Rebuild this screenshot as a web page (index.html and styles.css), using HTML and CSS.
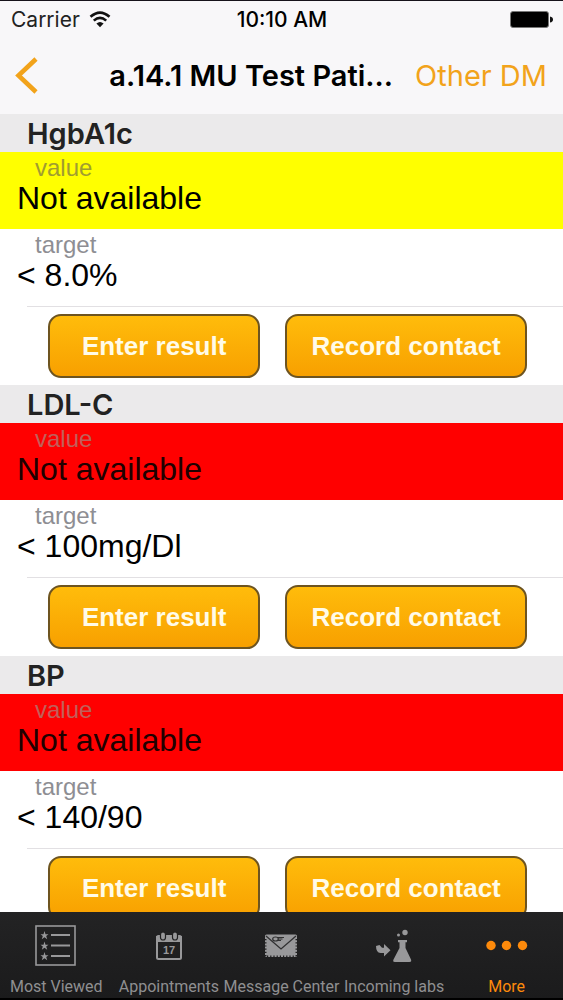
FILE: index.html
```html
<!DOCTYPE html>
<html lang="en">
<head>
<meta charset="UTF-8">
<meta name="viewport" content="width=device-width, initial-scale=1.0">
<title>Patient results</title>
<link rel="stylesheet" href="styles.css">
</head>
<body>

<header class="top">
    <div class="status">
        <span class="carrier">Carrier
            <svg width="22" height="17" viewBox="0 0 22 17">
                <path d="M1.5 5.8Q11-2.6 20.5 5.8M4.8 9.6Q11 4 17.2 9.6" fill="none" stroke="#111" stroke-width="2.6"/>
                <path d="M7.4 12.4Q11 9.4 14.6 12.4L11 16.2Z" fill="#111"/>
            </svg>
        </span>
        <span class="time">10:10 AM</span>
        <svg class="battery" width="43" height="17" viewBox="0 0 43 17">
            <rect x="0.5" y="0.5" width="38" height="16" rx="2.5" fill="#000" stroke="#777"/>
            <path d="M40 5.5Q43 6 43 8.5T40 11.5Z" fill="#111"/>
        </svg>
    </div>
    <nav class="navbar">
        <button class="back" aria-label="Back">
            <svg width="23" height="37" viewBox="0 0 23 37">
                <path d="M21 2L3.5 18.5L21 35" fill="none" stroke="#f2a31b" stroke-width="4.6"/>
            </svg>
        </button>
        <h1 class="title">a.14.1 MU Test Pati...</h1>
        <button class="other">Other DM</button>
    </nav>
</header>

<main class="results">
    <section>
        <h2 class="name">HgbA1c</h2>
        <div class="row yellow">
            <p class="label">value</p>
            <p class="data">Not available</p>
        </div>
        <div class="row">
            <p class="label">target</p>
            <p class="data">&lt; 8.0%</p>
        </div>
        <div class="actions">
            <button class="action">Enter result</button>
            <button class="action wide">Record contact</button>
        </div>
    </section>

    <section>
        <h2 class="name">LDL-C</h2>
        <div class="row red">
            <p class="label">value</p>
            <p class="data">Not available</p>
        </div>
        <div class="row">
            <p class="label">target</p>
            <p class="data">&lt; 100mg/Dl</p>
        </div>
        <div class="actions">
            <button class="action">Enter result</button>
            <button class="action wide">Record contact</button>
        </div>
    </section>

    <section>
        <h2 class="name">BP</h2>
        <div class="row red">
            <p class="label">value</p>
            <p class="data">Not available</p>
        </div>
        <div class="row">
            <p class="label">target</p>
            <p class="data">&lt; 140/90</p>
        </div>
        <div class="actions">
            <button class="action">Enter result</button>
            <button class="action wide">Record contact</button>
        </div>
    </section>
</main>

<nav class="tabs">
    <a class="tab" href="#viewed">
        <svg width="42" height="42" viewBox="0 0 42 42">
            <rect x="1" y="1" width="39" height="39" fill="none" stroke="#98989a" stroke-width="1.6"/>
            <path d="M16 10H35M16 20.5H35M16 31H35" stroke="#98989a" stroke-width="2"/>
            <!-- one star, drawn three times -->
            <g fill="#98989a">
                <path id="star" d="M9.5 6L10.5 9.2H13.5L11.2 11L12.2 14.2L9.5 12.3L6.8 14.2L7.8 11L5.5 9.2H8.5Z"/>
                <use href="#star" y="10.5"/>
                <use href="#star" y="21"/>
            </g>
        </svg>
        <span>Most Viewed</span>
    </a>
    <a class="tab" href="#appointments">
        <svg width="28" height="42" viewBox="0 0 28 42">
            <rect x="2" y="11" width="24" height="23" rx="1.5" fill="none" stroke="#98989a" stroke-width="2"/>
            <path d="M1 11H27V17H1Z" fill="#98989a"/>
            <rect x="5.5" y="7" width="5" height="8" rx="2.5" fill="#98989a" stroke="#202021" stroke-width="1.2"/>
            <rect x="17.5" y="7" width="5" height="8" rx="2.5" fill="#98989a" stroke="#202021" stroke-width="1.2"/>
            <text class="day" x="14" y="29" text-anchor="middle">17</text>
        </svg>
        <span>Appointments</span>
    </a>
    <a class="tab" href="#messages">
        <svg width="34" height="42" viewBox="0 0 34 42">
            <rect x="1" y="9.5" width="32" height="22.5" rx="1.5" fill="#98989a"/>
            <path d="M1.5 14V32M32.5 14V32M3 31.5H32" fill="none" stroke="#202021" stroke-width="2" stroke-dasharray="1.2 2"/>
            <path d="M2 11L17 24L32 11" fill="none" stroke="#303031" stroke-width="1.3"/>
            <ellipse cx="11.5" cy="14" rx="2.8" ry="2" fill="none" stroke="#303031" stroke-width="1.2"/>
            <path d="M13 12.5H20M14 14H18.5M13 15.5H17" stroke="#303031"/>
        </svg>
        <span>Message Center</span>
    </a>
    <a class="tab" href="#labs">
        <svg width="36" height="42" viewBox="0 0 36 42">
            <g fill="#98989a">
                <path d="M0 21L3.5 20L6 22.8H8V19L14.500 25.200L8 31.500V28H4.500Q0 27.500 0 21Z"/>
                <path d="M22 15H31V17.200H29.500V23L35 34.500Q35.800 37 33.500 37H18.800Q16.500 37 17.500 34.500L23.500 23V17.200H22Z"/>
                <circle cx="22.5" cy="10" r="1.5"/>
                <circle cx="29" cy="7.5" r="2.7"/>
            </g>
        </svg>
        <span>Incoming labs</span>
    </a>
    <a class="tab active" href="#more">
        <svg width="42" height="42" viewBox="0 0 42 42">
            <g fill="#fd8a0b">
                <circle cx="5" cy="20.5" r="4.7"/>
                <circle cx="20.5" cy="20.5" r="4.7"/>
                <circle cx="36.5" cy="20.5" r="4.7"/>
            </g>
        </svg>
        <span>More</span>
    </a>
</nav>

</body>
</html>
```

FILE: styles.css
```css
* {
    box-sizing: border-box;
    margin: 0;
}
body {
    display: flex;
    flex-direction: column;
    height: 100vh;
    overflow: hidden;
    background: white;
    color: black;
    font-family: "Liberation Sans", Arial, sans-serif;
}
button {
    border: none;
    padding: 0;
    background: none;
    font-family: inherit;
}
svg {
    display: block;
}

/* status bar and title */
.top {
    flex: none;
    border-top: 1px solid #16121a;
    background: #f8f7f9;
    font-family: Inter, sans-serif;
}
.status {
    display: grid;
    grid-template-columns: 1fr auto 1fr;
    align-items: center;
    height: 37px;
    padding: 0 10px 0 11px;
    font-size: 21px;
}
.carrier {
    display: flex;
    align-items: center;
    gap: 9px;
    color: #222;
}
.time {
    font-weight: 500;
}
.battery {
    justify-self: end;
}
.navbar {
    display: flex;
    align-items: center;
    height: 76px;
    padding: 0 16px 2px 15px;
}
.title {
    flex: 1;
    margin-right: 22px;
    text-align: right;
    font-size: 29px;
    font-weight: 600;
    white-space: nowrap;
}
.other {
    color: #f2a31b;
    font-size: 29px;
}

/* result list */
.results {
    flex: 1;
    min-height: 0;
    overflow: hidden;
}
.name {
    height: 38px;
    padding-left: 27px;
    background: #ebeaeb;
    color: #222;
    font-family: Inter, sans-serif;
    font-size: 29px;
    font-weight: 600;
    line-height: 40px;
}
.row {
    height: 77px;
    padding: 2px 17px;
}
.yellow {
    background: #ffff00;
}
.red {
    background: #ff0000;
}
.label {
    padding-left: 18px;
    color: #8e8e93;
    font-size: 24px;
    line-height: 28px;
}
.yellow .label {
    color: #a09c30;
}
.red .label {
    color: #c0605a;
}
.data {
    font-size: 32px;
    line-height: 32px;
}
.red .data {
    color: #200000;
}
.actions {
    display: flex;
    gap: 25px;
    height: 79px;
    margin-left: 27px;
    padding: 7px 36px 7px 21px;
    border-top: 1px solid #e2e0e3;
}
.action {
    flex: 212;
    border: 2px solid #6d5420;
    border-radius: 13px;
    background: linear-gradient(#ffbc0b, #f8a000);
    color: #fffbe8;
    font-size: 26px;
    font-weight: bold;
    white-space: nowrap;
}
.wide {
    flex: 242;
}

/* bottom tabs */
.tabs {
    flex: none;
    display: grid;
    grid-template-columns: repeat(5, minmax(0, 1fr));
    height: 88px;
    padding-top: 13px;
    border-bottom: 2px solid black;
    background: linear-gradient(#232324, #1b1b1c);
    font-family: Roboto, sans-serif;
}
.tab {
    display: flex;
    flex-direction: column;
    align-items: center;
    gap: 8px;
    color: #8f8f91;
    font-size: 16px;
    line-height: 24px;
    text-decoration: none;
    white-space: nowrap;
}
.active {
    color: #fd8a0b;
}
.day {
    fill: #98989a;
    font-family: "Liberation Sans", Arial, sans-serif;
    font-size: 11px;
    font-weight: bold;
}
```
